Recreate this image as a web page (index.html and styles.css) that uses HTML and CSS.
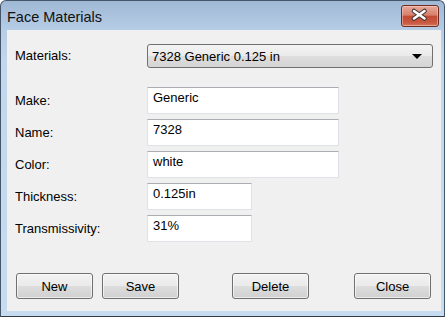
FILE: index.html
```html
<!DOCTYPE html>
<html>
<head>
    <title>Face Materials</title>
    <link rel="stylesheet" href="styles.css">
</head>
<body>
<div class="window">
    <div class="titlebar">
        <span class="title">Face Materials</span>
        <div class="close-x">
            <svg width="38" height="22" viewBox="0 0 38 22">
                <path d="M13 6 L23.5 13.5 M23.5 6 L13 13.5" stroke="#3b3434" stroke-width="4.6" fill="none" stroke-linecap="round"/>
                <path d="M13 6 L23.5 13.5 M23.5 6 L13 13.5" stroke="#ffffff" stroke-width="2.6" fill="none" stroke-linecap="round"/>
            </svg>
        </div>
    </div>
    <div class="client">
        <div class="row materials-row">
            <span class="label">Materials:</span>
            <div class="combo">
                <span>7328 Generic 0.125 in</span>
                <span class="arrow"></span>
            </div>
        </div>
        <div class="fields">
            <div class="row">
                <span class="label">Make:</span>
                <div class="field wide">Generic</div>
            </div>
            <div class="row">
                <span class="label">Name:</span>
                <div class="field wide">7328</div>
            </div>
            <div class="row">
                <span class="label">Color:</span>
                <div class="field wide">white</div>
            </div>
            <div class="row">
                <span class="label">Thickness:</span>
                <div class="field narrow">0.125in</div>
            </div>
            <div class="row">
                <span class="label">Transmissivity:</span>
                <div class="field narrow">31%</div>
            </div>
        </div>
        <div class="buttons">
            <div class="btn btn-new">New</div>
            <div class="btn">Save</div>
            <div class="btn btn-delete">Delete</div>
            <div class="btn btn-close">Close</div>
        </div>
    </div>
</div>
</body>
</html>
```

FILE: styles.css
```css
body {
    margin: 0;
    background-color: white;
}
.window {
    width: 445px;
    height: 317px;
    box-sizing: border-box;
    border: 1px solid #46566a;
    border-bottom-color: #2f3a46;
    border-radius: 6px 6px 0 0;
    background: linear-gradient(#9fb8d4, #b6cde6 29px, #c2d7ed 60px, #c8dcf0);
    padding: 0 3px 5px 6px;
    display: flex;
    flex-direction: column;
    font-family: "Liberation Sans", Arial, sans-serif;
    color: black;
}
.titlebar {
    height: 29px;
    display: flex;
    justify-content: space-between;
    align-items: flex-start;
}
.title {
    font-size: 14.5px;
    line-height: 18px;
    padding-top: 7px;
    color: #111;
}
.close-x {
    width: 38px;
    height: 22px;
    box-sizing: border-box;
    margin-top: 4px;
    margin-right: 2px;
    border: 1px solid #6e2c22;
    border-radius: 3px;
    background: linear-gradient(#e6a99b 0%, #d8806c 45%, #c44a34 52%, #c95a42 85%, #d47a5e 100%);
    box-shadow: inset 0 0 0 1px rgba(255, 220, 210, 0.45);
    position: relative;
}
.close-x svg {
    position: absolute;
    top: -1px;
    left: -1px;
}
.client {
    flex: 1;
    background-color: #f0f0f0;
    padding: 14px 10px 0 8px;
    font-size: 13px;
}
.row {
    display: grid;
    grid-template-columns: 132px auto;
    align-items: center;
}
.label {
    line-height: 16px;
}
.combo {
    width: 286px;
    height: 24px;
    box-sizing: border-box;
    border: 1px solid #707070;
    border-radius: 3px;
    background: linear-gradient(#f3f3f3 0%, #ebebeb 48%, #dedede 52%, #d4d4d4 100%);
    padding: 0 10px 0 4px;
    display: flex;
    align-items: center;
    justify-content: space-between;
}
.arrow {
    width: 0;
    height: 0;
    border-left: 5px solid transparent;
    border-right: 5px solid transparent;
    border-top: 5px solid black;
    margin-top: 1px;
}
.fields {
    margin-top: 19px;
    display: grid;
    row-gap: 5px;
}
.field {
    height: 27px;
    box-sizing: border-box;
    border: 1px solid #dfe3e8;
    border-top-color: #abadb3;
    background-color: white;
    padding: 2px 5px;
    line-height: 16px;
}
.wide {
    width: 192px;
}
.narrow {
    width: 105px;
}
.buttons {
    margin-top: 31px;
    display: flex;
    gap: 9px;
}
.btn {
    width: 77px;
    height: 26px;
    box-sizing: border-box;
    border: 1px solid #707070;
    border-radius: 3px;
    background: linear-gradient(#f2f2f2 0%, #ebebeb 48%, #dddddd 52%, #d0d0d0 100%);
    box-shadow: inset 0 0 0 1px rgba(255, 255, 255, 0.6);
    display: flex;
    align-items: center;
    justify-content: center;
}
.btn-new {
    margin-left: 1px;
}
.btn-delete {
    margin-left: 44px;
}
.btn-close {
    margin-left: auto;
}
```
